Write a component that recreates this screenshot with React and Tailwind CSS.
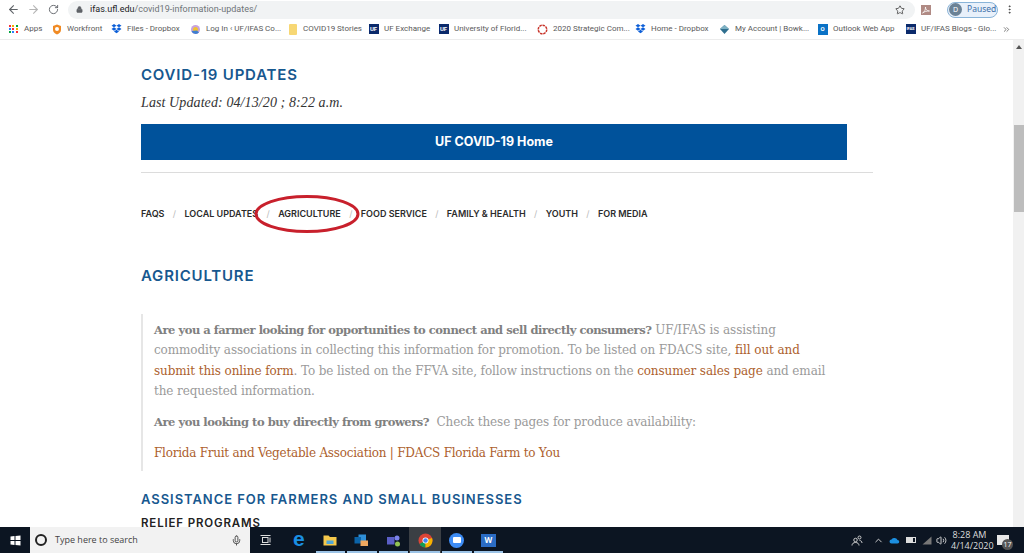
import React from "react";
import { ArrowLeft, ArrowRight, RotateCw, Lock, Star, MoreVertical, Mic, ChevronUp, Volume2, ChevronsRight } from "lucide-react";

const Dropbox = () => (
  <svg width="11" height="10" viewBox="0 0 22 20" fill="#0d5fd8">
    <path d="M6 0l5 3.3-5 3.4-5-3.4zM16 0l5 3.3-5 3.4-5-3.4zM1 10l5-3.3 5 3.3-5 3.4zM21 10l-5-3.3-5 3.3 5 3.4zM6 15l5-3.3 5 3.3-5 3.5z" />
  </svg>
);

const UfBox = ({ label = "UF", small }) => (
  <div className={`w-[10px] h-[10px] bg-[#0b2a6b] text-white font-bold flex items-center justify-center leading-none ${small ? "text-[4px]" : "text-[6px]"}`}>
    {label}
  </div>
);

const bookmarks = [
  { text: "Apps", w: "w-[17px]", icon: (
    <div className="grid grid-cols-3 gap-[1px] w-[10px]">
      {["bg-red-500", "bg-yellow-500", "bg-green-600", "bg-blue-500", "bg-red-500", "bg-yellow-500", "bg-green-600", "bg-blue-500", "bg-red-500"].map((c, i) => (
        <div key={i} className={`w-[2px] h-[2px] ${c}`} />
      ))}
    </div>
  ) },
  { text: "Workfront", w: "w-[34px]", icon: (
    <svg width="10" height="11" viewBox="0 0 20 22">
      <path d="M10 1l8 3v8c0 4-4 7-8 9-4-2-8-5-8-9V4z" fill="#f08a24" />
      <circle cx="10" cy="10" r="4" fill="#fff" />
    </svg>
  ) },
  { text: "Files - Dropbox", w: "w-[53px]", icon: <Dropbox /> },
  { text: "Log In \u2039 UF/IFAS Co...", w: "w-[71px]", icon: (
    <svg width="11" height="11" viewBox="0 0 22 22">
      <circle cx="11" cy="11" r="9" fill="#c9a3dc" />
      <circle cx="11" cy="11" r="5" fill="#f2c230" />
      <path d="M3 14a9 9 0 0 0 15 3l-4-4z" fill="#3f7fd0" />
    </svg>
  ) },
  { text: "COVID19 Stories", w: "w-[55px]", icon: <div className="w-[8px] h-[11px] mx-[1px] bg-[#f7d774] rounded-[1px]" /> },
  { text: "UF Exchange", w: "w-[44px]", icon: <UfBox /> },
  { text: "University of Florid...", w: "w-[73px]", icon: <UfBox /> },
  { text: "2020 Strategic Com...", w: "w-[72px]", icon: (
    <svg width="11" height="11" viewBox="0 0 22 22">
      <circle cx="11" cy="11" r="8.5" fill="none" stroke="#c8352b" strokeWidth="3" strokeDasharray="5 1.5" />
    </svg>
  ) },
  { text: "Home - Dropbox", w: "w-[58px]", icon: <Dropbox /> },
  { text: "My Account | Bowk...", w: "w-[72px]", icon: (
    <svg width="11" height="11" viewBox="0 0 22 22">
      <path d="M11 2l9 8-9 10-9-10z" fill="#2f6f8f" />
      <path d="M11 2l9 8H2z" fill="#7fb2c4" />
    </svg>
  ) },
  { text: "Outlook Web App", w: "w-[62px]", icon: (
    <div className="w-[10px] h-[11px] bg-[#0a72c6] text-white text-[6px] font-bold flex items-center justify-center leading-none">O</div>
  ) },
  { text: "UF/IFAS Blogs - Glo...", w: "w-[73px]", icon: <UfBox label="IFAS" small /> },
];

const navItems = ["FAQS", "LOCAL UPDATES", "AGRICULTURE", "FOOD SERVICE", "FAMILY & HEALTH", "YOUTH", "FOR MEDIA"];

const Bookmark = ({ item }) => (
  <div className="flex items-center gap-[5px] shrink-0">
    <div className="w-[11px] flex justify-center">{item.icon}</div>
    <span className={`${item.w} whitespace-nowrap text-[8px] text-[#5a5a5a] leading-none`}>{item.text}</span>
  </div>
);

const TaskIcon = ({ children, active, open }) => (
  <div className={`w-[31.6px] h-full flex items-center justify-center relative ${active ? "bg-[#3b3f44]" : ""}`}>
    {children}
    {open && <div className="absolute bottom-0 left-[1px] right-[1px] h-[2px] bg-[#9cc3e6]" />}
  </div>
);

const Strong = ({ children }) => (
  <b className="text-[11.5px] tracking-[-0.46px] text-[#808080]">{children}</b>
);

const Link = ({ children }) => <a className="text-[#ad5f2e]">{children}</a>;

const Browser = () => (
  <div className="shrink-0 h-[40px] bg-white">
    <div className="h-[19px] flex items-center text-[#5f6368] bg-white">
      <ArrowLeft size={13} className="ml-[7px]" />
      <ArrowRight size={13} className="ml-[7px] text-[#b5b5b5]" />
      <RotateCw size={11} className="ml-[8px]" />
      <div className="ml-[9px] h-[18px] w-[847px] rounded-full bg-[#f1f3f4] flex items-center pl-[8px]">
        <Lock size={7} fill="#5f6368" />
        <span className="ml-[7px] text-[9px] text-[#6f7478]" style={{ fontFamily: "Roboto, sans-serif" }}>
          <span className="text-[#202124]">ifas.ufl.edu</span>/covid19-information-updates/
        </span>
        <Star size={10} className="ml-auto mr-[10px] text-[#444]" />
      </div>
      <div className="ml-[6px] w-[10px] h-[10px] bg-[#b08a84] flex items-center justify-center">
        <svg width="8" height="8" viewBox="0 0 16 16" fill="none" stroke="#fff" strokeWidth="1.5">
          <path d="M1 14c4-2 6-6 6-12 0 5 3 8 8 8-5 0-10 1-14 4z" />
        </svg>
      </div>
      <div className="ml-[16px] w-[51px] h-[16px] rounded-full border border-[#8ab4d8] bg-[#e8f0fa] flex items-center">
        <div className="ml-[1px] w-[13px] h-[13px] rounded-full bg-[#6b8296] text-white text-[7px] flex items-center justify-center leading-none">D</div>
        <span className="ml-[5px] text-[8.5px] text-[#3d6fa8] leading-none">Paused</span>
      </div>
      <MoreVertical size={11} className="ml-[6px] text-[#444]" />
    </div>
    <div className="h-[21px] flex items-center pl-[8px] gap-[10px] bg-white border-b border-[#ececec] overflow-hidden" style={{ fontFamily: "Roboto, sans-serif" }}>
      {bookmarks.map((b) => <Bookmark key={b.text} item={b} />)}
      <ChevronsRight size={9} className="ml-[-2px] shrink-0 text-[#555]" />
    </div>
  </div>
);

const Page = () => (
  <div className="flex-1 min-h-0 relative flex overflow-hidden bg-white">
    <main className="flex-1 pl-[141px] overflow-hidden">
      <h1 className="mt-[26px] text-[15px] leading-[18px] font-semibold tracking-[0.8px] text-[#17588f]" style={{ fontFamily: "Inter, sans-serif" }}>COVID-19 UPDATES</h1>
      <p className="mt-[10px] text-[14px] leading-[18px] italic tracking-[0.1px] text-[#333]" style={{ fontFamily: "'Liberation Serif', serif" }}>Last Updated: 04/13/20 ; 8:22 a.m.</p>
      <div className="mt-[12px] w-[706px] h-[36px] bg-[#00529b] flex items-center justify-center text-white text-[12.5px] font-bold" style={{ fontFamily: "Inter, sans-serif" }}>UF COVID-19 Home</div>
      <div className="mt-[12px] w-[732px] h-px bg-[#dcdcdc]" />
      <nav className="mt-[35px] flex items-center h-[12px] text-[9px] font-semibold text-[#2b2b2b] whitespace-nowrap" style={{ fontFamily: "Inter, sans-serif" }}>
        {navItems.map((n, i) => (
          <React.Fragment key={n}>
            {i > 0 && <span className="w-[20px] text-center font-normal text-[#bbb]">/</span>}
            <span>{n}</span>
          </React.Fragment>
        ))}
      </nav>
      <h2 className="mt-[47px] text-[15px] leading-[18px] font-semibold tracking-[0.8px] text-[#17588f]" style={{ fontFamily: "Inter, sans-serif" }}>AGRICULTURE</h2>
      <blockquote className="mt-[29px] w-[700px] border-l-2 border-[#e6e6e6] pl-[11px] pb-[8px] text-[12px] tracking-[-0.1px] text-[#9a9a9a] whitespace-nowrap" style={{ fontFamily: "'DejaVu Serif', serif" }}>
        <p className="leading-[20.4px] pt-[6px]">
          <Strong>Are you a farmer looking for opportunities to connect and sell directly consumers?</Strong> UF/IFAS is assisting<br />
          commodity associations in collecting this information for promotion. To be listed on FDACS site, <Link>fill out and</Link><br />
          <Link>submit this online form</Link>. To be listed on the FFVA site, follow instructions on the <Link>consumer sales page</Link> and email<br />
          the requested information.
        </p>
        <p className="mt-[10px] leading-[20.4px]"><Strong>Are you looking to buy directly from growers?</Strong>&nbsp; Check these pages for produce availability:</p>
        <p className="mt-[11px] leading-[20.4px] tracking-[-0.24px] text-[#ad5f2e]">Florida Fruit and Vegetable Association | FDACS Florida Farm to You</p>
      </blockquote>
      <h3 className="mt-[20px] text-[13px] leading-[16px] font-semibold tracking-[0.95px] text-[#17588f]" style={{ fontFamily: "Inter, sans-serif" }}>ASSISTANCE FOR FARMERS AND SMALL BUSINESSES</h3>
      <h4 className="mt-[9px] text-[11.5px] leading-[14px] font-semibold tracking-[0.85px] text-[#222]" style={{ fontFamily: "Inter, sans-serif" }}>RELIEF PROGRAMS</h4>
    </main>
    <div className="w-[11px] shrink-0 bg-[#f1f1f1] relative">
      <div className="mx-auto mt-[5px] w-0 h-0 border-x-[3px] border-x-transparent border-b-[4px] border-b-[#555]" />
      <div className="absolute top-[85px] left-[1px] right-0 h-[87px] bg-[#bdbdbd]" />
    </div>
    <svg className="absolute left-[253px] top-[153px]" width="110" height="42" viewBox="0 0 110 42">
      <ellipse cx="54" cy="21" rx="51" ry="17.5" fill="none" stroke="#c8202c" strokeWidth="3" />
    </svg>
  </div>
);

const Taskbar = () => (
  <div className="shrink-0 h-[26px] bg-[#0c1522] flex items-center text-white" style={{ fontFamily: "'Open Sans', sans-serif" }}>
    <div className="w-[30px] flex justify-center">
      <svg width="11" height="11" viewBox="0 0 22 22" fill="#fff">
        <path d="M1 3l8-1v8H1zM11 2l10-1v9H11zM1 12h8v8l-8-1zM11 12h10v9l-10-1z" />
      </svg>
    </div>
    <div className="w-[220px] h-full bg-[#f2f2f2] flex items-center text-[#444] pl-[5px]">
      <div className="w-[12px] h-[12px] rounded-full border-2 border-[#222]" />
      <span className="ml-[8px] text-[9px]">Type here to search</span>
      <Mic size={11} className="ml-auto mr-[8px] text-[#444]" />
    </div>
    <div className="w-[30px] flex justify-center">
      <svg width="11" height="10" viewBox="0 0 22 20" fill="none" stroke="#ddd" strokeWidth="2">
        <rect x="5" y="5" width="11" height="10" />
        <path d="M1 1h20M1 19h20M20 5v10" />
      </svg>
    </div>
    <div className="ml-[3px] flex items-center h-full">
      <TaskIcon>
        <span className="text-[21px] font-bold text-[#1a8fe3] leading-none pb-[3px]" style={{ fontFamily: "'Liberation Sans', sans-serif" }}>e</span>
      </TaskIcon>
      <TaskIcon open>
        <svg width="14" height="12" viewBox="0 0 28 24">
          <path d="M1 3h10l3 3h13v17H1z" fill="#f5c84c" />
          <rect x="7" y="13" width="14" height="7" fill="#4fa6d8" />
        </svg>
      </TaskIcon>
      <TaskIcon open>
        <svg width="15" height="13" viewBox="0 0 30 26">
          <rect x="9" y="1" width="15" height="15" fill="#2f8fd8" />
          <rect x="1" y="6" width="13" height="13" fill="#0b63a8" />
          <rect x="13" y="13" width="15" height="11" fill="#f0a860" />
        </svg>
      </TaskIcon>
      <TaskIcon open>
        <svg width="15" height="13" viewBox="0 0 30 26">
          <rect x="2" y="6" width="15" height="15" fill="#5b5fc7" />
          <circle cx="22" cy="8" r="5" fill="#7b83eb" />
          <circle cx="23" cy="20" r="5" fill="#92c353" />
        </svg>
      </TaskIcon>
      <TaskIcon active open>
        <svg width="15" height="15" viewBox="0 0 30 30">
          <circle cx="15" cy="15" r="14" fill="#db4437" />
          <path d="M15 15L3 22a14 14 0 0 0 12 7z" fill="#0f9d58" />
          <path d="M15 15v14a14 14 0 0 0 13-19z" fill="#f4b400" />
          <circle cx="15" cy="15" r="6" fill="#fff" />
          <circle cx="15" cy="15" r="4.5" fill="#4285f4" />
        </svg>
      </TaskIcon>
      <TaskIcon open>
        <div className="w-[15px] h-[15px] rounded-full bg-[#3d8cf5] flex items-center justify-center">
          <div className="w-[8px] h-[6px] rounded-[1px] bg-white" />
        </div>
      </TaskIcon>
      <TaskIcon open>
        <div className="w-[15px] h-[13px] bg-[#2b6cc4] text-white text-[8px] font-bold flex items-center justify-center leading-none">W</div>
      </TaskIcon>
    </div>
    <div className="ml-auto flex items-center h-full text-[#ddd]">
      <svg width="12" height="11" viewBox="0 0 24 22" fill="none" stroke="#ddd" strokeWidth="1.8">
        <circle cx="9" cy="10" r="3.5" />
        <path d="M2 21c0-4 3-6 7-6s7 2 7 6" />
        <circle cx="17" cy="5" r="3" />
        <path d="M17 11c3 0 5 2 5 5" />
      </svg>
      <ChevronUp size={11} className="ml-[10px]" />
      <svg className="ml-[5px]" width="11" height="7" viewBox="0 0 22 14" fill="#1c8fe0">
        <path d="M5 13a4 4 0 0 1 0-8 7 7 0 0 1 12 1 3.5 3.5 0 0 1 0 7z" />
      </svg>
      <div className="ml-[6px] w-[10px] h-[6px] border border-[#ddd] flex"><div className="w-[6px] bg-[#ddd]" /></div>
      <svg className="ml-[6px]" width="10" height="9" viewBox="0 0 20 18" fill="#777">
        <path d="M1 17L19 1v16z" />
      </svg>
      <Volume2 size={11} className="ml-[4px]" />
      <div className="ml-[4px] w-[37px] text-center text-[9px] leading-[11px] whitespace-nowrap">8:28 AM<br />4/14/2020</div>
      <div className="ml-[9px] mr-[15px] relative w-[12px] h-[10px] bg-[#e8e8e8]">
        <div className="absolute -right-[4px] -bottom-[5px] w-[11px] h-[11px] rounded-full bg-[#555] text-white text-[7px] flex items-center justify-center leading-none">17</div>
      </div>
    </div>
  </div>
);

export default function App() {
  return (
    <div className="w-[1024px] h-[553px] flex flex-col overflow-hidden bg-white">
      <Browser />
      <Page />
      <Taskbar />
    </div>
  );
}
